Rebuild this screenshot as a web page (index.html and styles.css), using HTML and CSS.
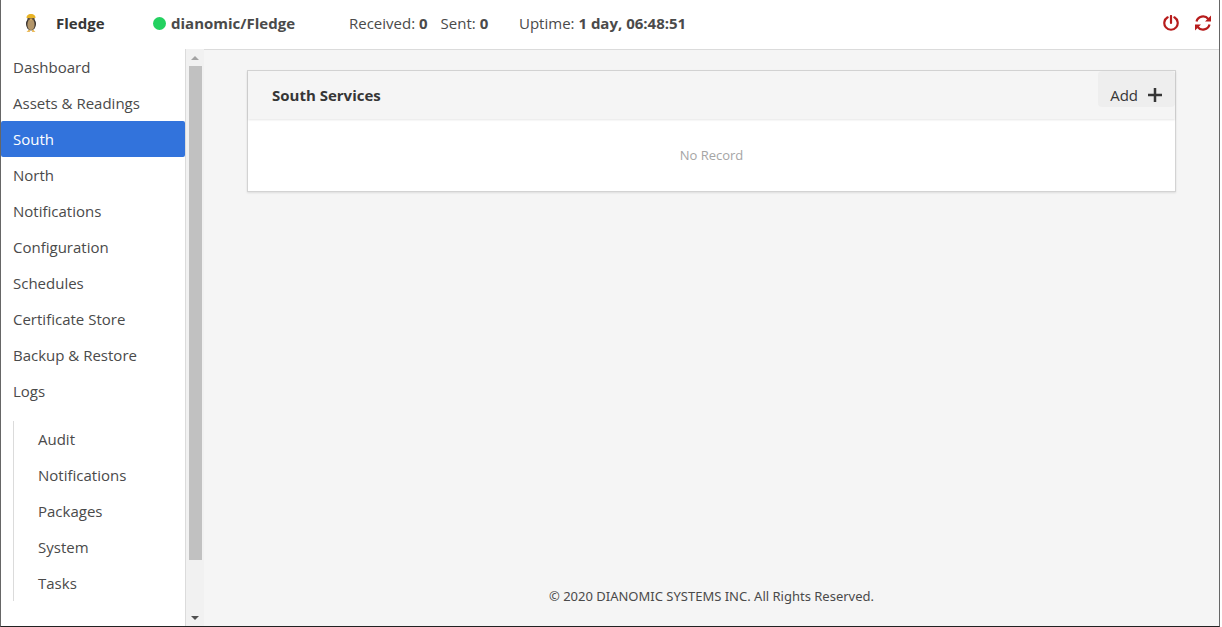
FILE: index.html
```html
<!DOCTYPE html>
<html lang="en">
<head>
<meta charset="utf-8">
<title>Fledge</title>
<link rel="stylesheet" href="styles.css">
</head>
<body>
<div class="app">
  <header class="navbar">
    <a class="brand" href="#">
      <svg class="brand-logo" viewBox="0 0 12 20" aria-hidden="true">
        <ellipse cx="6" cy="11" rx="5" ry="6.5" fill="#3b3531"/>
        <circle cx="6" cy="5" r="3.6" fill="#5a4c39"/>
        <ellipse cx="6" cy="11.5" rx="3.6" ry="5.5" fill="#b3966a"/>
        <path d="M1.500 5C1.500 2 3.600 1 6 1s4.500 1 4.500 4z" fill="#e8b325"/>
        <path d="M4.500 5.500h3L6 8z" fill="#d6ad61"/>
        <path d="M1.500 18.800 4.500 16.500 5 18.800zM10.500 18.800 7.500 16.500 7 18.800z" fill="#e5a62a"/>
      </svg>
      <span>Fledge</span>
    </a>
    <div class="host"><span class="status"></span><strong>dianomic/Fledge</strong></div>
    <div class="stats">
      <span>Received: <strong>0</strong></span>
      <span>Sent: <strong>0</strong></span>
    </div>
    <div class="uptime">Uptime: <strong>1 day, 06:48:51</strong></div>
    <div class="actions">
      <button class="icon-button" type="button" aria-label="Shutdown">
        <svg viewBox="0 0 16 16" aria-hidden="true"><path d="M4.600 2.300A6.700 6.700 0 1 0 11.400 2.300M8 1v7" fill="none" stroke="currentColor" stroke-width="2.200" stroke-linecap="round"/></svg>
      </button>
      <button class="icon-button" type="button" aria-label="Restart">
        <svg viewBox="0 0 16 16" aria-hidden="true"><path d="M1.500 6.500A6.700 6.700 0 0 1 13.300 4M14.500 9.500A6.700 6.700 0 0 1 2.700 12" fill="none" stroke="currentColor" stroke-width="2.200"/><path d="M16 .5v6h-6zM0 15.500v-6h6z" fill="currentColor"/></svg>
      </button>
    </div>
  </header>
  <div class="body">
    <aside class="sidebar">
      <nav class="menu" aria-label="Main">
        <ul class="menu-list">
          <li><a href="#">Dashboard</a></li>
          <li><a href="#">Assets &amp; Readings</a></li>
          <li><a class="is-active" href="#" aria-current="page">South</a></li>
          <li><a href="#">North</a></li>
          <li><a href="#">Notifications</a></li>
          <li><a href="#">Configuration</a></li>
          <li><a href="#">Schedules</a></li>
          <li><a href="#">Certificate Store</a></li>
          <li><a href="#">Backup &amp; Restore</a></li>
          <li><a href="#">Logs</a>
            <ul class="submenu">
              <li><a href="#">Audit</a></li>
              <li><a href="#">Notifications</a></li>
              <li><a href="#">Packages</a></li>
              <li><a href="#">System</a></li>
              <li><a href="#">Tasks</a></li>
            </ul>
          </li>
        </ul>
      </nav>
      <div class="scrollbar" aria-hidden="true">
        <span class="arrow arrow-up"></span>
        <span class="track"><span class="thumb"></span></span>
        <span class="arrow arrow-down"></span>
      </div>
    </aside>
    <main class="content">
      <section class="card">
        <header class="card-header">
          <h1>South Services</h1>
          <button class="add-button" type="button">Add
            <svg viewBox="0 0 14 14" aria-hidden="true"><path d="M7 0v14M0 7h14" stroke="currentColor" stroke-width="2.500"/></svg>
          </button>
        </header>
        <p class="empty">No Record</p>
      </section>
      <footer class="footer">© 2020 DIANOMIC SYSTEMS INC. All Rights Reserved.</footer>
    </main>
  </div>
</div>
</body>
</html>
```
FILE: styles.css
```css
* { box-sizing: border-box; }
body {
  margin: 0;
  padding-right: 2px;
  background: #fff;
  color: #4a4a4a;
  font: 15px/24px "Open Sans", "Noto Sans", sans-serif;
}
a { color: inherit; text-decoration: none; }
ul { list-style: none; margin: 0; padding: 0; }
button { font: inherit; border: 0; cursor: pointer; }
strong { font-weight: 700; }
.app {
  display: flex;
  flex-direction: column;
  height: 100vh;
  border: solid #666;
  border-width: 0 1px 1px;
  border-bottom-color: #222;
}
.navbar {
  display: flex;
  align-items: center;
  height: 49px;
  padding: 0 8px 3px 24px;
  white-space: nowrap;
}
.brand { display: flex; align-items: center; width: 128px; color: #363636; font-weight: 700; }
.brand-logo { width: 12px; height: 20px; margin-right: 19px; }
.host { display: flex; align-items: center; width: 196px; }
.status { width: 13px; height: 13px; margin-right: 5px; border-radius: 50%; background: #23d160; }
.stats { display: flex; gap: 13px; width: 170px; }
.actions { display: flex; gap: 16px; margin-left: auto; }
.icon-button { display: flex; padding: 0; background: none; color: #b71c1c; }
.icon-button svg { width: 16px; height: 16px; }
.body { display: flex; flex: 1; min-height: 0; }
.sidebar { display: flex; flex: 0 0 203px; }
.menu { flex: 1; overflow: hidden; }
.menu-list a { display: block; padding: 6px 12px; border-radius: 2px; }
.menu-list .is-active { background: #3273dc; color: #fff; }
.submenu { margin: 12px; padding-left: 12px; border-left: 1px solid #dbdbdb; }
.scrollbar {
  display: flex;
  flex-direction: column;
  align-items: center;
  width: 19px;
  border-left: 1px solid #dbdbdb;
  background: #f1f1f1;
}
.arrow { margin: 7px 0 6px; border: solid transparent; border-width: 0 4px; }
.arrow-up { border-bottom: 4px solid #a3a3a3; }
.arrow-down { border-top: 4px solid #505050; }
.track { flex: 1; width: 13px; }
.thumb { display: block; height: 91%; background: #c1c1c1; }
.content {
  display: flex;
  flex: 1;
  flex-direction: column;
  justify-content: space-between;
  padding: 20px 43px 18px;
  border-top: 1px solid #dbdbdb;
  background: #f5f5f5;
}
.card { border: 1px solid #d3d3d3; background: #fff; box-shadow: 0 1px 2px #0a0a0a1a; }
.card-header {
  display: flex;
  align-items: flex-start;
  justify-content: space-between;
  background: #f5f5f5;
  box-shadow: 0 1px 2px #0a0a0a1a;
}
.card-header h1 { margin: 0; padding: 12px 24px; color: #363636; font-size: 15px; line-height: 24px; }
.add-button {
  display: flex;
  align-items: center;
  gap: 10px;
  height: 36px;
  padding: 12px 13px 0 12px;
  border-radius: 4px;
  background: #eee;
  color: #363636;
}
.add-button svg { width: 14px; height: 14px; }
.empty { margin: 0; padding: 24px; color: #a5a5a5; font-size: 13px; text-align: center; }
.footer { font-family: "Noto Sans", "Open Sans", sans-serif; font-size: 13px; text-align: center; }
```
